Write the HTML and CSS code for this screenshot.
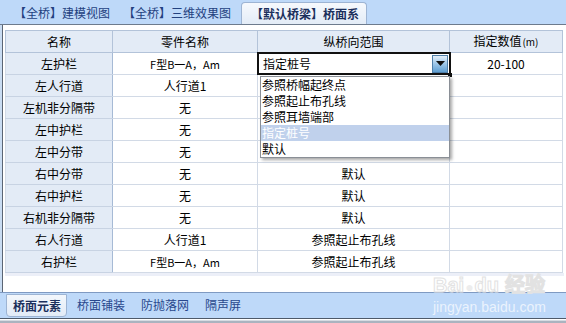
FILE: index.html
```html
<!DOCTYPE html>
<html lang="zh-CN">
<head>
<meta charset="utf-8">
<title>桥面系</title>
<link rel="stylesheet" href="styles.css">
</head>
<body>
<div class="app">
  <div class="topbar">
    <div class="ttab t1">【全桥】建模视图</div>
    <div class="ttab t2">【全桥】三维效果图</div>
    <div class="ttab active">【默认桥梁】桥面系</div>
  </div>
  <div class="main">
    <table class="grid">
      <colgroup>
        <col class="c1"><col class="c2"><col class="c3"><col class="c4">
      </colgroup>
      <thead>
        <tr><th class="name">名称</th><th>零件名称</th><th>纵桥向范围</th><th>指定数值<span class="unit">(m)</span></th></tr>
      </thead>
      <tbody>
        <tr>
          <td class="name">左护栏</td><td class="lat">F型B一A，Am</td>
          <td class="combo-cell">
            <div class="combo">
              <span class="combo-text">指定桩号</span>
              <span class="combo-btn"><svg width="9" height="5" viewBox="0 0 9 5"><path d="M0 0h9L4.5 5z" fill="#111"/></svg></span>
              <span class="grip"></span>
              <ul class="list">
                <li>参照桥幅起终点</li>
                <li>参照起止布孔线</li>
                <li>参照耳墙端部</li>
                <li class="sel">指定桩号</li>
                <li>默认</li>
              </ul>
            </div>
          </td>
          <td>20-100</td>
        </tr>
        <tr><td class="name">左人行道</td><td>人行道1</td><td></td><td></td></tr>
        <tr><td class="name">左机非分隔带</td><td>无</td><td></td><td></td></tr>
        <tr><td class="name">左中护栏</td><td>无</td><td></td><td></td></tr>
        <tr><td class="name">左中分带</td><td>无</td><td></td><td></td></tr>
        <tr><td class="name">右中分带</td><td>无</td><td>默认</td><td></td></tr>
        <tr><td class="name">右中护栏</td><td>无</td><td>默认</td><td></td></tr>
        <tr><td class="name">右机非分隔带</td><td>无</td><td>默认</td><td></td></tr>
        <tr><td class="name">右人行道</td><td>人行道1</td><td>参照起止布孔线</td><td></td></tr>
        <tr><td class="name">右护栏</td><td class="lat">F型B一A，Am</td><td>参照起止布孔线</td><td></td></tr>
      </tbody>
    </table>
    <div class="hscroll"></div>
  </div>
  <div class="bottombar">
    <div class="btab active">桥面元素</div>
    <div class="btab">桥面铺装</div>
    <div class="btab">防抛落网</div>
    <div class="btab">隔声屏</div>
  </div>
  <div class="footer-line"></div>
  <div class="watermark">
    <div class="wm-logo">Bai<span class="paw">&#9679;</span>du 经验</div>
    <div class="wm-url">jingyan.baidu.com</div>
  </div>
</div>
</body>
</html>
```

FILE: styles.css
```css
* { box-sizing: border-box; }
html, body { margin: 0; padding: 0; }
body {
  width: 566px;
  height: 323px;
  overflow: hidden;
  background: #c9dcf2;
  font-family: "Noto Sans CJK SC", "Noto Sans", sans-serif;
  font-size: 12px;
  color: #000;
}
.app { position: relative; width: 566px; height: 323px; }

/* top tabs */
.topbar {
  height: 25px;
  background: #bed9f9;
  border-bottom: 1px solid #6d7b8d;
  display: flex;
  align-items: flex-end;
  padding-left: 14px;
}
.ttab {
  height: 22px;
  line-height: 22px;
  color: #23417f;
  white-space: nowrap;
  font-size: 12px;
}
.t1 { margin-right: 13px; }
.t2 { margin-right: 10px; }
.ttab.active {
  margin-top: 2px;
  padding: 0 7px 0 9px;
  background: linear-gradient(#f6f9fd, #e3ecf7);
  border: 1px solid #9db4d3;
  border-bottom: none;
  border-radius: 4px 4px 0 0;
  font-weight: bold;
  color: #1b2f5c;
}

/* main */
.main {
  margin-left: 2px;
  border-left: 1px solid #5b6574;
  background: #fff;
  height: 267px;
  padding: 5px 0 0 2px;
}
.grid {
  border-collapse: collapse;
  table-layout: fixed;
  width: 557px;
  border: 1px solid #b3c2d8;
}
.c1 { width: 107px; }
.c2 { width: 145px; }
.c3 { width: 192px; }
.c4 { width: 113px; }
.grid th, .grid td {
  border: 1px solid #d2dae6;
  height: 22px;
  padding: 0;
  text-align: center;
  font-weight: normal;
  white-space: nowrap;
  line-height: 20px;
}
.grid th {
  height: 21px;
  background: #e3ebf6;
  border-color: #b3c3d9;
}
.grid td.name {
  background: #e3ebf6;
  border-right: 1px solid #a6bad5;
  border-bottom-color: #c8d3e3;
}
.unit { font-size: 10px; margin-left: 1px; }
.lat { font-size: 11px; }

/* combo */
.combo-cell { position: relative; }
.combo {
  position: absolute;
  left: -1px; top: -1px; right: -2px; bottom: -1px;
  border: 2px solid #111;
  background: #fff;
  display: flex;
  align-items: center;
  text-align: left;
  z-index: 2;
}
.combo-text { flex: 1; padding-left: 4px; font-size: 12px; }
.combo-btn {
  width: 16px;
  height: 18px;
  margin-right: 1px;
  background: linear-gradient(#e4eff9, #9cc6e8 50%, #5f9fd3);
  border: 1px solid #4f7fa9;
  display: flex;
  align-items: center;
  justify-content: center;
}
.grip {
  position: absolute;
  right: -3px; bottom: -4px;
  width: 4px; height: 4px;
  background: #111;
}
.list {
  position: absolute;
  top: 22px;
  left: 1px;
  width: 190px;
  margin: 0;
  padding: 0;
  list-style: none;
  background: #fff;
  border: 1px solid #8a8f96;
  box-shadow: 2px 2px 3px rgba(0,0,0,0.35);
}
.list li {
  height: 16px;
  line-height: 16px;
  padding-left: 1px;
  font-size: 12px;
}
.list li.sel { background: #c0d1ec; color: #fff; }

.hscroll {
  width: 559px;
  height: 3px;
  background: #eceff8;
}

/* bottom tabs */
.bottombar {
  height: 27px;
  background: #bed9f9;
  border-top: 1px solid #7f9ac2;
  border-bottom: 1px solid #4e5a6a;
  display: flex;
  align-items: stretch;
  padding: 1px 0 1px 6px;
}
.btab {
  line-height: 22px;
  color: #28478c;
  margin-right: 16px;
  font-size: 12px;
}
.btab.active {
  padding: 0 5px 0 6px;
  margin-right: 10px;
  background: linear-gradient(#f3f7fc, #e2ebf7);
  border: 1px solid #9db4d3;
  border-radius: 0 0 4px 4px;
  font-weight: bold;
  color: #1b2f5c;
}
.footer-line {
  height: 4px;
  background: linear-gradient(#ffffff 0 1px, #d6dbe2 1px 2px, #aab3bf 2px);
}

/* watermark overlay */
.watermark {
  position: absolute;
  left: 433px;
  top: 274px;
  width: 120px;
  pointer-events: none;
}
.wm-logo {
  font-family: "Liberation Sans", sans-serif;
  font-size: 20px;
  font-weight: bold;
  color: #fff;
  -webkit-text-stroke: 1px #e2e2e2;
  line-height: 22px;
}
.paw { font-size: 14px; color: #ededed; -webkit-text-stroke: 0; margin: 0 1px; }
.wm-url {
  font-family: "Liberation Sans", sans-serif;
  font-size: 14px;
  color: rgba(255,255,255,0.7);
  line-height: 16px;
  margin-top: 1px;
}
```
